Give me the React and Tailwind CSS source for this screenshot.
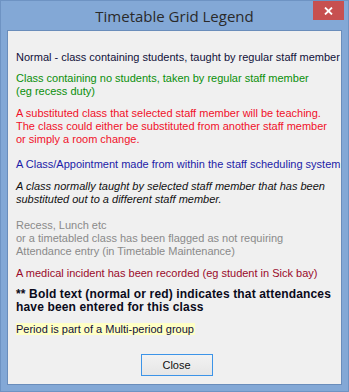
import React from 'react';

const legend = [
  { lines: ['Normal - class containing students, taught by regular staff member'], cls: 'text-[#10103a]', mt: 'mt-[20px]' },
  { lines: ['Class containing no students, taken by regular staff member', '(eg recess duty)'], cls: 'text-[#0a8f0a]', mt: 'mt-[8px]' },
  {
    lines: [
      'A substituted class that selected staff member will be teaching.',
      'The class could either be substituted from another staff member',
      'or simply a room change.',
    ],
    cls: 'text-[#f0102a]',
    mt: 'mt-[9px]',
  },
  { lines: ['A Class/Appointment made from within the staff scheduling system'], cls: 'text-[#1c1ca8]', mt: 'mt-[12px]' },
  {
    lines: ['A class normally taught by selected staff member that has been', 'substituted out to a different staff member.'],
    cls: 'text-[#111] italic',
    mt: 'mt-[9px]',
  },
  {
    lines: [
      'Recess, Lunch etc',
      'or a timetabled class has been flagged as not requiring',
      'Attendance entry (in Timetable Maintenance)',
    ],
    cls: 'text-[#8a8a8a]',
    mt: 'mt-[13px]',
  },
  { lines: ['A medical incident has been recorded (eg student in Sick bay)'], cls: 'text-[#9a0a2a]', mt: 'mt-[9px]' },
  {
    lines: ['** Bold text (normal or red) indicates that attendances', 'have been entered for this class'],
    cls: 'text-[#0a0a1a] font-bold text-[12px] tracking-[0.15px]',
    mt: 'mt-[8px]',
  },
];

export default function App() {
  return (
    <div className="w-[349px] h-[392px] bg-[#83a8d6] border border-[#6e93c3] flex flex-col" style={{ fontFamily: '"Liberation Sans", Arial, sans-serif' }}>
      {/* title bar */}
      <div className="relative h-[29px] flex items-center justify-center">
        <span className="text-[15px] text-[#2a2a2a] pt-[1px]" style={{ fontFamily: '"Open Sans", "Noto Sans", sans-serif' }}>
          Timetable Grid Legend
        </span>
        <button className="absolute top-0 right-[4px] w-[31px] h-[19px] bg-[#c75050] flex items-center justify-center">
          <svg width="9" height="8" viewBox="0 0 9 8">
            <path d="M1 0.5 L8 7.5 M8 0.5 L1 7.5" stroke="#fff" strokeWidth="1.8" />
          </svg>
        </button>
      </div>

      {/* client area */}
      <div className="flex-1 mx-[6px] mb-[6px] border border-[#6a8dbb] bg-[#f0f0f0] flex flex-col pl-[8px] text-[11px] leading-[13px]">
        {legend.map((p, i) => (
          <div key={i} className={`${p.mt} ${p.cls}`}>
            {p.lines.map((l, j) => (
              <div key={j}>{l}</div>
            ))}
          </div>
        ))}
        <div className="mt-[9px]">
          <span className="bg-[#ffffc4] text-[#10103a] pr-[1px]">Period is part of a Multi-period group</span>
        </div>
        <div className="mt-[18px] flex justify-center">
          <button className="w-[72px] h-[22px] border border-[#3c94e8] bg-gradient-to-b from-[#f2f2f2] to-[#e6e6e6] text-[11px] text-[#111] ml-[-4px]">
            Close
          </button>
        </div>
      </div>
    </div>
  );
}
